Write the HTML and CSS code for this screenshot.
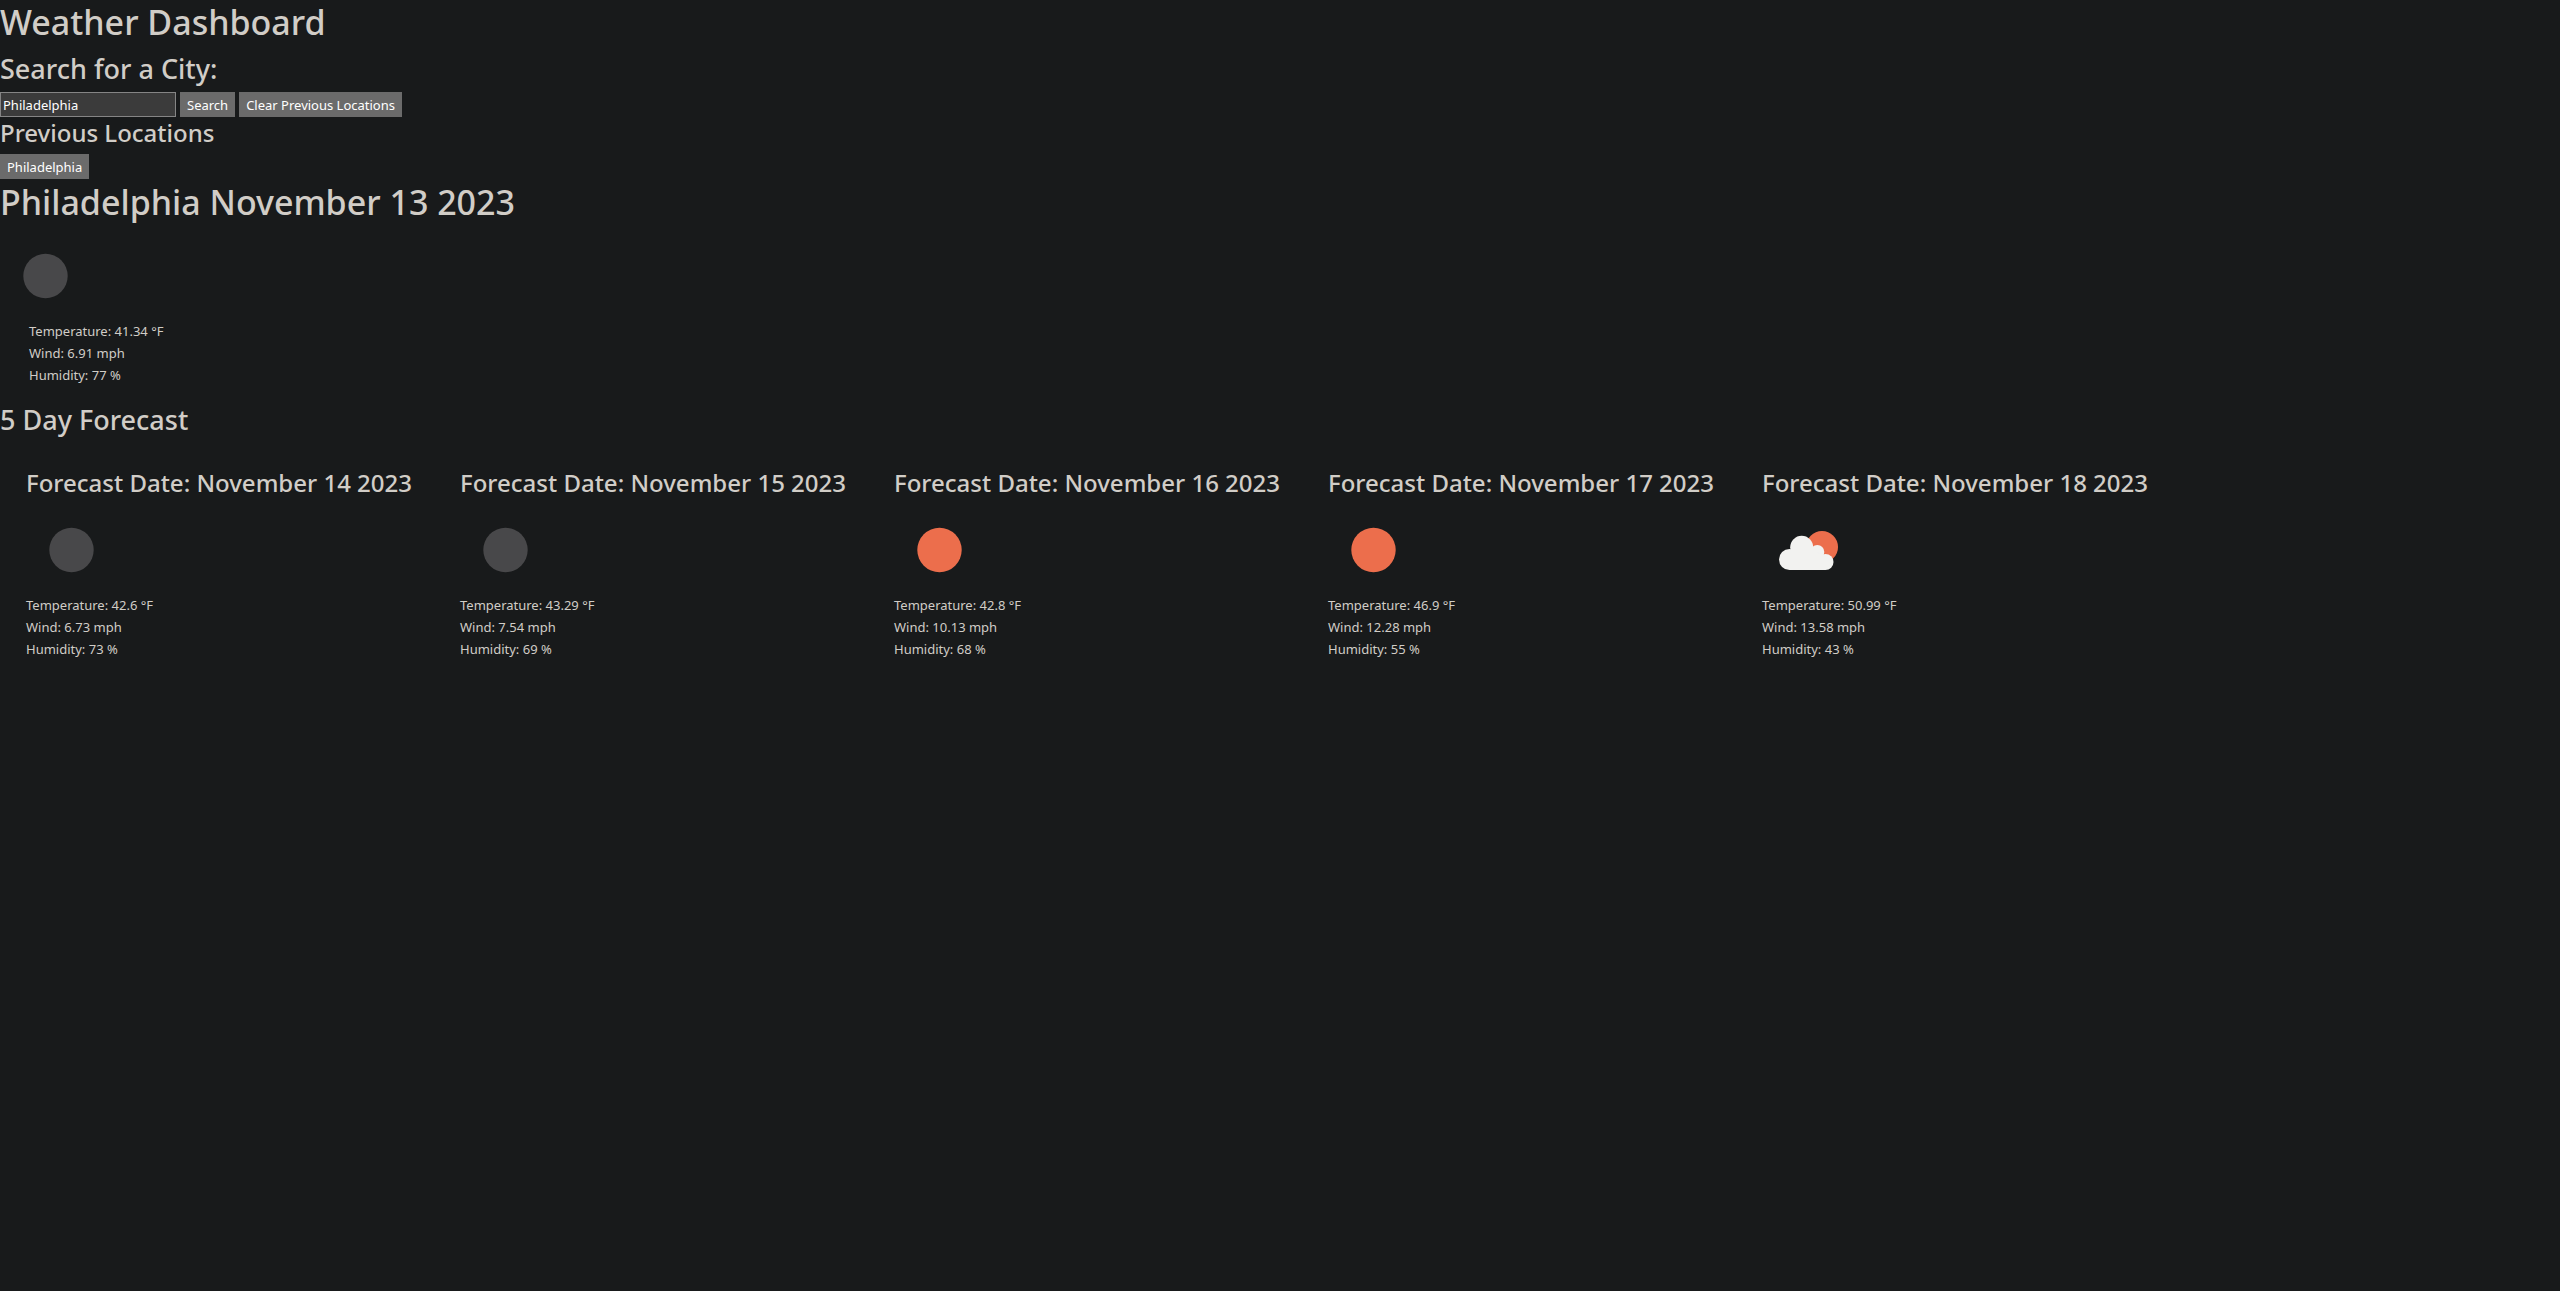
FILE: index.html
```html
<!DOCTYPE html>
<html lang="en">
<head>
<meta charset="utf-8">
<meta name="viewport" content="width=device-width, initial-scale=1">
<title>Weather Dashboard</title>
<link rel="stylesheet" href="styles.css">
</head>
<body>
<svg class="sprite" aria-hidden="true">
  <symbol id="disc" viewBox="0 0 90 90"><circle cx="45.5" cy="46" r="22.2" fill="currentColor"/></symbol>
  <symbol id="few-clouds" viewBox="0 0 90 90">
    <circle cx="60" cy="43" r="16" fill="#ec6e4c"/>
    <g fill="#f2f2f0">
      <circle cx="27.5" cy="55.5" r="10.5"/>
      <circle cx="39.7" cy="43.3" r="11.5"/>
      <circle cx="55.3" cy="48" r="7"/>
      <circle cx="63.5" cy="58" r="8"/>
      <path d="M27.5 66V49L39 47H53L63.5 53V66Z"/>
    </g>
  </symbol>
</svg>
<header>
  <h1>Weather Dashboard</h1>
</header>
<main>
  <section>
    <h2><label for="city">Search for a City:</label></h2>
    <form class="search">
      <input class="field" id="city" type="text" value="Philadelphia">
      <button class="button" type="button">Search</button>
      <button class="button" type="button">Clear Previous Locations</button>
    </form>
    <h3>Previous Locations</h3>
    <div class="history">
      <button class="button" type="button">Philadelphia</button>
    </div>
  </section>
  <section>
    <h1>Philadelphia November 13 2023</h1>
    <svg class="icon night" role="img" aria-label="Clear night"><use href="#disc"/></svg>
    <ul class="readings current">
      <li>Temperature: 41.34 °F</li>
      <li>Wind: 6.91 mph</li>
      <li>Humidity: 77 %</li>
    </ul>
  </section>
  <section>
    <h2>5 Day Forecast</h2>
    <div class="forecast">
      <article class="day">
        <h3>Forecast Date: November 14 2023</h3>
        <svg class="icon night" role="img" aria-label="Clear night"><use href="#disc"/></svg>
        <ul class="readings"><li>Temperature: 42.6 °F</li><li>Wind: 6.73 mph</li><li>Humidity: 73 %</li></ul>
      </article>
      <article class="day">
        <h3>Forecast Date: November 15 2023</h3>
        <svg class="icon night" role="img" aria-label="Clear night"><use href="#disc"/></svg>
        <ul class="readings"><li>Temperature: 43.29 °F</li><li>Wind: 7.54 mph</li><li>Humidity: 69 %</li></ul>
      </article>
      <article class="day">
        <h3>Forecast Date: November 16 2023</h3>
        <svg class="icon sun" role="img" aria-label="Sunny"><use href="#disc"/></svg>
        <ul class="readings"><li>Temperature: 42.8 °F</li><li>Wind: 10.13 mph</li><li>Humidity: 68 %</li></ul>
      </article>
      <article class="day">
        <h3>Forecast Date: November 17 2023</h3>
        <svg class="icon sun" role="img" aria-label="Sunny"><use href="#disc"/></svg>
        <ul class="readings"><li>Temperature: 46.9 °F</li><li>Wind: 12.28 mph</li><li>Humidity: 55 %</li></ul>
      </article>
      <article class="day">
        <h3>Forecast Date: November 18 2023</h3>
        <svg class="icon" role="img" aria-label="Few clouds"><use href="#few-clouds"/></svg>
        <ul class="readings"><li>Temperature: 50.99 °F</li><li>Wind: 13.58 mph</li><li>Humidity: 43 %</li></ul>
      </article>
    </div>
  </section>
</main>
</body>
</html>
```
FILE: styles.css
```css
*, *::before, *::after { box-sizing: border-box; }

body {
  margin: 0;
  background: #181a1b;
  color: #d1cdc7;
  font-family: "Segoe UI", "Noto Sans", "Open Sans", sans-serif;
  font-size: 13px;
  line-height: 22px;
}

.sprite { display: none; }

h1, h2, h3 { margin: 0 0 6px; padding-top: 1px; font-weight: 550; }
h1 { font-size: 34px; line-height: 43px; }
h2 { font-size: 27px; line-height: 35px; }
h3 { font-size: 24px; line-height: 30px; }

.search { display: flex; gap: 4px; }
.history { display: flex; height: 26px; }

.field {
  width: 176px;
  height: 25px;
  padding: 0 2px;
  border: 1px solid #858585;
  background: #3b3b3b;
  color: #fff;
  font: inherit;
}

.button {
  height: 25px;
  padding: 0 7px;
  border: 0;
  background: #6b6b6b;
  color: #fff;
  font: inherit;
}

.icon { display: block; width: 90px; height: 90px; }
.night { color: #48484a; }
.sun { color: #ec6e4c; }

.readings { margin: 0; padding: 0 0 15px; list-style: none; }
.current { padding-left: 29px; }

.forecast { display: flex; flex-wrap: wrap; }
.day { flex: 0 1 434px; min-width: 0; padding: 24px 20px 24px 26px; }
.day h3 { white-space: nowrap; }
```
